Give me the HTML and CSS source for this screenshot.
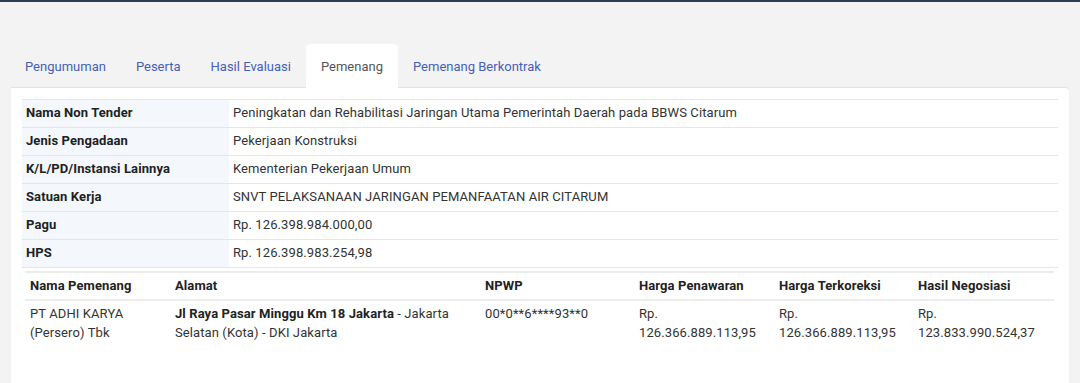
FILE: index.html
```html
<!DOCTYPE html>
<html lang="id">
<head>
<meta charset="utf-8">
<title>Pemenang</title>
<link rel="stylesheet" href="styles.css">
</head>
<body>
<div class="topbar"></div>
<main class="page">
  <nav class="tabs">
    <a class="tab" href="#">Pengumuman</a>
    <a class="tab" href="#">Peserta</a>
    <a class="tab" href="#">Hasil Evaluasi</a>
    <a class="tab active" href="#">Pemenang</a>
    <a class="tab" href="#">Pemenang Berkontrak</a>
  </nav>
  <section class="card">
    <table class="info">
      <tbody>
        <tr><th>Nama Non Tender</th><td>Peningkatan dan Rehabilitasi Jaringan Utama Pemerintah Daerah pada BBWS Citarum</td></tr>
        <tr><th>Jenis Pengadaan</th><td>Pekerjaan Konstruksi</td></tr>
        <tr><th>K/L/PD/Instansi Lainnya</th><td>Kementerian Pekerjaan Umum</td></tr>
        <tr><th>Satuan Kerja</th><td>SNVT PELAKSANAAN JARINGAN PEMANFAATAN AIR CITARUM</td></tr>
        <tr><th>Pagu</th><td>Rp. 126.398.984.000,00</td></tr>
        <tr><th>HPS</th><td>Rp. 126.398.983.254,98</td></tr>
        <tr>
          <td class="nested" colspan="2">
            <table class="winners">
              <colgroup>
                <col class="c-nama"><col class="c-alamat"><col class="c-npwp"><col class="c-harga"><col class="c-harga2"><col class="c-harga3">
              </colgroup>
              <thead>
                <tr>
                  <th>Nama Pemenang</th>
                  <th>Alamat</th>
                  <th>NPWP</th>
                  <th>Harga Penawaran</th>
                  <th>Harga Terkoreksi</th>
                  <th>Hasil Negosiasi</th>
                </tr>
              </thead>
              <tbody>
                <tr>
                  <td>PT ADHI KARYA (Persero) Tbk</td>
                  <td><b>Jl Raya Pasar Minggu Km 18 Jakarta</b> - Jakarta Selatan (Kota) - DKI Jakarta</td>
                  <td>00*0**6****93**0</td>
                  <td>Rp. 126.366.889.113,95</td>
                  <td>Rp. 126.366.889.113,95</td>
                  <td>Rp. 123.833.990.524,37</td>
                </tr>
              </tbody>
            </table>
          </td>
        </tr>
      </tbody>
    </table>
  </section>
</main>
</body>
</html>
```
FILE: styles.css
```css
* { box-sizing: border-box; }
html, body {
  margin: 0;
  padding: 0;
  background: #f3f3f3;
  font-family: Roboto, "Liberation Sans", Arial, sans-serif;
  font-size: 13px;
  letter-spacing: 0.1px;
  color: #333;
}
.topbar {
  height: 2px;
  background: #2e3e50;
}
.page {
  padding: 42px 11px 0 11px;
}
.tabs {
  display: flex;
  margin-left: -1px;
}
.tab {
  display: block;
  height: 44px;
  padding: 14px 15px 0 15px;
  line-height: 17px;
  letter-spacing: 0;
  color: #4660b8;
  text-decoration: none;
  border-radius: 4px 4px 0 0;
}
.tab.active {
  background: #fff;
  color: #555;
  position: relative;
  z-index: 1;
}
.card {
  background: #fff;
  border-radius: 0 4px 0 0;
  box-shadow: 0 -1px 1px rgba(0,0,0,0.07);
  padding: 11px 11px 40px 11px;
  height: 300px;
}
table {
  border-collapse: collapse;
  width: 100%;
}
.info > tbody > tr > th,
.info > tbody > tr > td {
  border-top: 1px solid #e6e6e6;
  padding: 4px 4px 6px 4px;
  line-height: 17px;
  text-align: left;
  vertical-align: top;
}
.info > tbody > tr > th {
  width: 207px;
  background: #f4f8fd;
  font-weight: bold;
  color: #222;
}
.info > tbody > tr > td {
  color: #333;
}
.info > tbody > tr > td.nested {
  padding: 3px 4px 0 3px;
}
.winners {
  table-layout: fixed;
  border-top: 2px solid #ececec;
}
.c-nama { width: 145px; }
.c-alamat { width: 310px; }
.c-npwp { width: 154px; }
.c-harga { width: 140px; }
.c-harga2 { width: 139px; }
.c-harga3 { width: 141px; }
.winners th {
  text-align: left;
  font-weight: bold;
  color: #222;
  padding: 4px 5px 5px 5px;
  line-height: 17px;
  border-bottom: 2px solid #ececec;
}
.winners td {
  padding: 3px 5px;
  line-height: 19px;
  vertical-align: top;
  color: #333;
}
.winners td b {
  color: #222;
}
```
